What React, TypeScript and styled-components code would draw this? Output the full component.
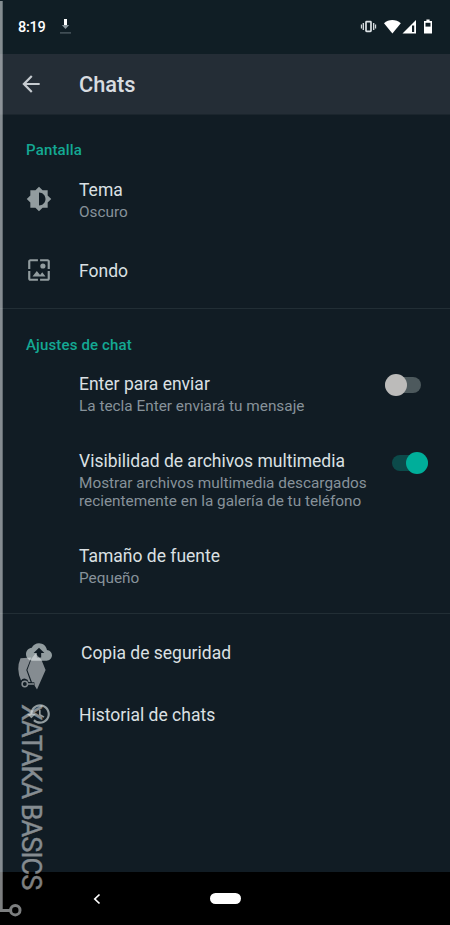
import React from "react";
import styled, { createGlobalStyle } from "styled-components";

const GlobalStyle = createGlobalStyle`
  * { box-sizing: border-box; }
  body { margin: 0; background: #111c24; }
`;

const Screen = styled.div`
  position: relative;
  width: 450px;
  height: 925px;
  display: flex;
  flex-direction: column;
  overflow: hidden;
  background: #111c24;
  color: #dadfe2;
  font-family: Roboto, sans-serif;
`;

const StatusBar = styled.div`
  height: 54px;
  padding: 0 17px 0 18px;
  display: flex;
  align-items: center;
  background: #101e25;
`;

const Clock = styled.span`
  width: 42px;
  color: #fff;
  font-size: 14.5px;
  font-weight: 500;
  letter-spacing: -0.3px;
`;

const StatusIcons = styled.div`
  margin-left: auto;
  display: flex;
  align-items: center;
`;

const Header = styled.header`
  height: 61px;
  padding-left: 18px;
  display: flex;
  align-items: center;
  background: #242d36;
  border-bottom: 1px solid #1b252d;
`;

const HeaderTitle = styled.h1`
  margin: 2px 0 0 35px;
  font-size: 21.8px;
  font-weight: 500;
  line-height: 26px;
  color: #d8dce0;
`;

const Content = styled.main`
  flex: 1;
`;

const Section = styled.section<{ $divided?: boolean; $top: number; $bottom: number }>`
  padding: ${(p) => p.$top}px 0 ${(p) => p.$bottom}px;
  border-bottom: ${(p) => (p.$divided ? "1px solid #222e35" : "none")};
`;

const SectionTitle = styled.h2`
  margin: 0 0 0 26px;
  height: 20px;
  line-height: 20px;
  font-size: 15px;
  font-weight: 500;
  letter-spacing: 0.15px;
  color: #14a893;
`;

const Row = styled.div<{ $height: number; $gap?: number }>`
  height: ${(p) => p.$height}px;
  margin-bottom: ${(p) => p.$gap ?? 0}px;
  display: flex;
  align-items: center;
`;

const IconSlot = styled.div`
  width: 79px;
  padding: 0 0 2px 26px;
  display: flex;
  flex: none;
`;

const RowText = styled.div<{ $indent?: number }>`
  width: 306px;
  flex: none;
  padding-left: ${(p) => p.$indent ?? 0}px;
  white-space: nowrap;
`;

const RowTitle = styled.div`
  font-size: 17.5px;
  line-height: 22px;
  color: #dbe0e3;
`;

const RowNote = styled.div`
  margin-top: 2px;
  font-size: 15.35px;
  line-height: 18px;
  color: #87929a;
`;

const Track = styled.div<{ $on?: boolean }>`
  align-self: flex-start;
  width: 36px;
  height: 16px;
  margin: ${(p) => (p.$on ? "21px 0 0 7px" : "21.5px 0 0 -0.5px")};
  display: flex;
  align-items: center;
  justify-content: ${(p) => (p.$on ? "flex-end" : "flex-start")};
  border-radius: 8px;
  background: ${(p) => (p.$on ? "#0c4a4a" : "#4d595d")};
`;

const Thumb = styled.div<{ $on?: boolean }>`
  width: 22px;
  height: 22px;
  flex: none;
  border-radius: 50%;
  background: ${(p) => (p.$on ? "#00ae9a" : "#bcbbba")};
`;

const NavBar = styled.nav`
  height: 53px;
  padding-left: 92px;
  display: flex;
  align-items: center;
  background: #000;
`;

const HomePill = styled.div`
  width: 31px;
  height: 11px;
  margin-left: 108px;
  border-radius: 6px;
  background: #fff;
`;

const Watermark = styled.div`
  position: absolute;
  inset: 0;
  opacity: 0.55;
  color: #e4e8ea;
  pointer-events: none;
`;

const WatermarkArt = styled.svg`
  position: absolute;
  left: 0;
  top: 0;
`;

const WatermarkText = styled.div`
  position: absolute;
  left: 15px;
  top: 704px;
  writing-mode: vertical-rl;
  font-size: 27px;
  line-height: 32px;
  letter-spacing: -1px;
  white-space: nowrap;
  -webkit-text-stroke: 0.3px currentColor;
`;

const paths = {
  theme:
    "M20 15.31L23.31 12 20 8.69V4h-4.69L12 .69 8.69 4H4v4.69L.69 12 4 15.31V20h4.69L12 23.31 15.31 20H20v-4.69zM12 18V6c3.31 0 6 2.69 6 6s-2.69 6-6 6z",
  wallpaper:
    "M4 4h7V2H4c-1.1 0-2 .9-2 2v7h2V4zm6 9l-4 5h12l-3-4-2.03 2.71L10 13zm8-4.7a2.4 2.4 0 1 0-4.8 0 2.4 2.4 0 0 0 4.8 0zM20 2h-7v2h7v7h2V4c0-1.1-.9-2-2-2zm0 18h-7v2h7c1.1 0 2-.9 2-2v-7h-2v7zM4 13H2v7c0 1.1.9 2 2 2h7v-2H4v-7z",
  backup:
    "M19.35 10.04C18.67 6.59 15.64 4 12 4 9.11 4 6.6 5.64 5.35 8.04 2.34 8.36 0 10.91 0 14c0 3.31 2.69 6 6 6h13c2.76 0 5-2.24 5-5 0-2.64-2.05-4.78-4.65-4.96zM14 13v4h-4v-4H7l5-5 5 5h-3z",
  history:
    "M13 3c-4.97 0-9 4.03-9 9H1l3.89 3.89.07.14L9 12H6c0-3.87 3.13-7 7-7s7 3.13 7 7-3.13 7-7 7c-1.93 0-3.68-.79-4.94-2.06l-1.42 1.42C8.27 19.99 10.51 21 13 21c4.97 0 9-4.03 9-9s-4.03-9-9-9zm-1 5v5l4.28 2.54.72-1.21-3.5-2.08V8H12z",
  back: "M20 11H7.83l5.59-5.59L12 4l-8 8 8 8 1.41-1.41L7.83 13H20v-2z",
};

function Icon({ name, size = 26, color = "#929c9f" }: { name: keyof typeof paths; size?: number; color?: string }) {
  return (
    <svg width={size} height={size} viewBox="0 0 24 24" fill={color}>
      <path d={paths[name]} />
    </svg>
  );
}

function Toggle({ on }: { on?: boolean }) {
  return (
    <Track $on={on}>
      <Thumb $on={on} />
    </Track>
  );
}

type SettingProps = {
  height: number;
  gap?: number;
  title: string;
  note?: React.ReactNode;
  icon?: keyof typeof paths;
  indent?: number;
  children?: React.ReactNode;
};

function Setting({ height, gap, title, note, icon, indent, children }: SettingProps) {
  return (
    <Row $height={height} $gap={gap}>
      <IconSlot>{icon && <Icon name={icon} />}</IconSlot>
      <RowText $indent={indent}>
        <RowTitle>{title}</RowTitle>
        {note && <RowNote>{note}</RowNote>}
      </RowText>
      {children}
    </Row>
  );
}

export default function App() {
  return (
    <>
      <GlobalStyle />
      <Screen>
        <StatusBar>
          <Clock>8:19</Clock>
          <svg width="12" height="16" viewBox="0 0 12 16">
            <path d="M4 0h3v6H4z" fill="#fff" />
            <path d="M1.8 6h7.4L5.5 10z" fill="#87949a" />
            <path d="M0 13.9h11" stroke="#56636a" strokeWidth="1.2" />
          </svg>
          <StatusIcons>
            <svg width="73" height="16" viewBox="0 0 73 16">
              <g stroke="#dce2e5" fill="none">
                <rect x="6" y="2.7" width="5" height="9.6" rx="0.6" strokeWidth="1.7" />
                <path d="M3.3 4v7M13.7 4v7" strokeWidth="1.3" />
                <path d="M1.4 5.5v4M15.6 5.5v4" strokeWidth="1.1" />
              </g>
              <path d="M24 4.2C28.6-.2 36-.2 40.8 4.2L32.4 14.5z" fill="#fff" />
              <path d="M42.5 14.5L56 1V14.5z" fill="#fff" />
              <path d="M52 6.5h2.2V13H52z" fill="#101e25" />
              <path d="M64 2h2.4V.5h3.2V2H72v12.6h-8z" fill="#fff" />
              <path d="M65.5 3.8h5v3.8h-5z" fill="#101e25" />
            </svg>
          </StatusIcons>
        </StatusBar>
        <Header>
          <Icon name="back" color="#c6cbd0" />
          <HeaderTitle>Chats</HeaderTitle>
        </Header>
        <Content>
          <Section $top={25} $bottom={7} $divided>
            <SectionTitle>Pantalla</SectionTitle>
            <Setting height={80} icon="theme" title="Tema" note="Oscuro" />
            <Setting height={61} icon="wallpaper" title="Fondo" />
          </Section>
          <Section $top={26} $bottom={7} $divided>
            <SectionTitle>Ajustes de chat</SectionTitle>
            <Setting height={77} gap={2} title="Enter para enviar" note="La tecla Enter enviará tu mensaje">
              <Toggle />
            </Setting>
            <Setting
              height={92}
              title="Visibilidad de archivos multimedia"
              note={
                <>
                  Mostrar archivos multimedia descargados
                  <br />
                  recientemente en la galería de tu teléfono
                </>
              }
            >
              <Toggle on />
            </Setting>
            <Setting height={80} title="Tamaño de fuente" note="Pequeño" />
          </Section>
          <Section $top={8} $bottom={0}>
            <Setting height={62} icon="backup" title="Copia de seguridad" indent={2} />
            <Setting height={62} icon="history" title="Historial de chats" />
          </Section>
        </Content>
        <NavBar>
          <svg width="10" height="12" viewBox="0 0 10 12" fill="none" stroke="#fff" strokeWidth="1.7">
            <path d="M7.5 1.5L2.8 6l4.7 4.5" />
          </svg>
          <HomePill />
        </NavBar>
        <Watermark>
          <WatermarkArt width="60" height="925" viewBox="0 0 60 925">
            <path d="M1.3 1v909.5H10" fill="none" stroke="currentColor" strokeWidth="2.8" />
            <circle cx="15.3" cy="910.2" r="4.7" fill="none" stroke="currentColor" strokeWidth="3" />
            <path d="M20.5 658.3L31.2 657.6L26.3 670L30.6 682H28.6A4.2 4.2 0 0 0 21 680.5Q15.8 669 20.5 658.3z" fill="currentColor" />
            <path d="M31.6 658.5L35.5 653.5L41.5 660L45.6 670L37 689.5L34.6 685.5L34.3 682.2H32L27.4 670z" fill="currentColor" />
            <circle cx="24.8" cy="684" r="2.7" fill="none" stroke="currentColor" strokeWidth="1.5" />
            <path d="M27.5 684H34" stroke="currentColor" strokeWidth="1.5" />
          </WatermarkArt>
          <WatermarkText>XATAKA BASICS</WatermarkText>
        </Watermark>
      </Screen>
    </>
  );
}
